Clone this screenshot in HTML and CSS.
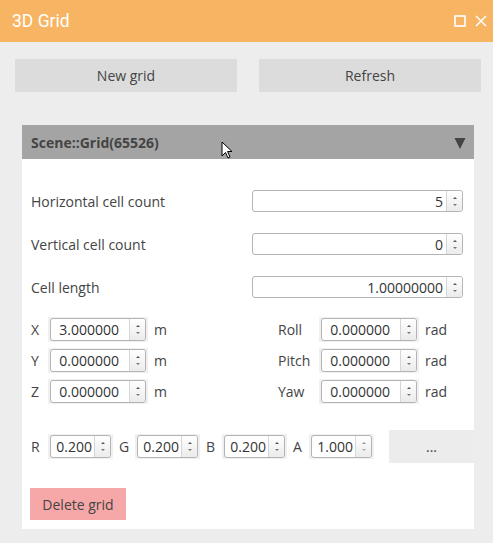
FILE: index.html
```html
<!DOCTYPE html>
<html>
<head>
<meta charset="utf-8">
<link rel="stylesheet" href="styles.css">
</head>
<body>
<div class="titlebar">
  <span class="title">3D Grid</span>
  <span class="win-icons">
    <svg width="12" height="12" viewBox="0 0 12 12"><rect x="1" y="1" width="10" height="10" fill="none" stroke="#fff" stroke-width="1.6"/></svg>
    <svg width="12" height="12" viewBox="0 0 12 12"><path d="M1 1 L11 11 M11 1 L1 11" stroke="#fff" stroke-width="1.5"/></svg>
  </span>
</div>
<div class="toolbar">
  <div class="btn">New grid</div>
  <div class="btn">Refresh</div>
</div>
<div class="panel">
  <div class="panel-header">
    <span>Scene::Grid(65526)</span>
    <svg class="caret" width="12" height="12" viewBox="0 0 12 12"><path d="M0.5 1 L11.5 1 L6 12 Z" fill="#444"/></svg>
  </div>
  <div class="panel-body">
    <div class="form">
      <div class="frow"><span>Horizontal cell count</span>
        <div class="spin wide"><span class="val">5</span><span class="arrows"><i class="up"></i><i class="dn"></i></span></div></div>
      <div class="frow"><span>Vertical cell count</span>
        <div class="spin wide"><span class="val">0</span><span class="arrows"><i class="up"></i><i class="dn"></i></span></div></div>
      <div class="frow"><span>Cell length</span>
        <div class="spin wide"><span class="val">1.00000000</span><span class="arrows"><i class="up"></i><i class="dn"></i></span></div></div>
    </div>
    <div class="pose">
      <span>X</span><div class="wrap"><div class="spin mid"><span class="val">3.000000</span><span class="arrows"><i class="up"></i><i class="dn"></i></span></div></div><span class="unit">m</span>
      <span>Roll</span><div class="wrap"><div class="spin mid"><span class="val">0.000000</span><span class="arrows"><i class="up"></i><i class="dn"></i></span></div></div><span class="unit2">rad</span>
      <span>Y</span><div class="wrap"><div class="spin mid"><span class="val">0.000000</span><span class="arrows"><i class="up"></i><i class="dn"></i></span></div></div><span class="unit">m</span>
      <span>Pitch</span><div class="wrap"><div class="spin mid"><span class="val">0.000000</span><span class="arrows"><i class="up"></i><i class="dn"></i></span></div></div><span class="unit2">rad</span>
      <span>Z</span><div class="wrap"><div class="spin mid"><span class="val">0.000000</span><span class="arrows"><i class="up"></i><i class="dn"></i></span></div></div><span class="unit">m</span>
      <span>Yaw</span><div class="wrap"><div class="spin mid"><span class="val">0.000000</span><span class="arrows"><i class="up"></i><i class="dn"></i></span></div></div><span class="unit2">rad</span>
    </div>
    <div class="color">
      <span class="cl first">R</span><div class="wrap"><div class="spin small"><span class="val">0.200</span><span class="arrows"><i class="up"></i><i class="dn"></i></span></div></div>
      <span class="cl">G</span><div class="wrap"><div class="spin small"><span class="val">0.200</span><span class="arrows"><i class="up"></i><i class="dn"></i></span></div></div>
      <span class="cl">B</span><div class="wrap"><div class="spin small"><span class="val">0.200</span><span class="arrows"><i class="up"></i><i class="dn"></i></span></div></div>
      <span class="cl">A</span><div class="wrap"><div class="spin small"><span class="val">1.000</span><span class="arrows"><i class="up dim"></i><i class="dn dim"></i></span></div></div>
      <div class="btn dots">...</div>
    </div>
    <div class="btn delete">Delete grid</div>
  </div>
</div>
<svg class="cursor" width="13" height="19" viewBox="0 0 13 19"><path d="M1 1 L1 15 L4.5 11.5 L7 17 L9 16 L6.5 10.5 L11 10.5 Z" fill="#fff" stroke="#000" stroke-width="1" stroke-linejoin="round"/></svg>
</body>
</html>
```
FILE: styles.css
```css
html, body { margin: 0; padding: 0; }
body {
  background: #ededed;
  font-family: "Open Sans", "DejaVu Sans", sans-serif;
  font-size: 14px;
  color: #444;
  width: 493px;
  height: 543px;
  position: relative;
  overflow: hidden;
}
.titlebar {
  height: 42px;
  background: #f7b563;
  display: flex;
  align-items: center;
  justify-content: space-between;
  padding: 0 6px 0 12px;
}
.title {
  font-family: Roboto, "Liberation Sans", sans-serif;
  font-size: 17.5px;
  color: #fff;
}
.win-icons { display: flex; gap: 9px; align-items: center; }
.win-icons svg { display: block; }
.toolbar {
  display: grid;
  grid-template-columns: 222px 222px;
  column-gap: 22px;
  padding: 17px 0 0 15px;
}
.btn {
  background: #dcdcdc;
  height: 33px;
  display: flex;
  align-items: center;
  justify-content: center;
  color: #444;
}
.panel {
  margin: 33px 0 0 22px;
  width: 452px;
}
.panel-header {
  height: 34px;
  background: #a4a4a4;
  display: flex;
  align-items: center;
  justify-content: space-between;
  padding: 0 8px 0 9px;
  font-weight: bold;
  font-size: 14px;
  color: #444;
}
.caret { display: block; margin-top: 1px; }
.panel-body {
  background: #fff;
  padding: 31px 0 9px 9px;
}
.form { display: flex; flex-direction: column; gap: 21px; padding-right: 11px; }
.frow { display: flex; justify-content: space-between; align-items: center; height: 22px; }
.spin {
  display: flex;
  border: 1px solid #b4b4b4;
  border-radius: 3px;
  background: #fff;
  box-sizing: border-box;
  font-size: 14px;
}
.spin .val {
  flex: 1;
  color: #333;
  display: flex;
  align-items: center;
  justify-content: flex-end;
}
.spin .arrows {
  width: 15px;
  border-left: 1px solid #d6d6d6;
  background: linear-gradient(#ffffff, #ebebeb);
  border-radius: 0 3px 3px 0;
  display: flex;
  flex-direction: column;
  align-items: center;
  justify-content: center;
  gap: 5px;
}
.arrows i {
  display: block;
  width: 0; height: 0;
  border-left: 2px solid transparent;
  border-right: 2px solid transparent;
}
.arrows i.up { border-bottom: 2px solid #555; }
.arrows i.dn { border-top: 2px solid #777; }
.arrows i.up.dim { border-bottom-color: #999; }
.arrows i.dn.dim { border-top-color: #aaa; }
.spin.wide { width: 211px; height: 22px; }
.spin.wide .val { padding-right: 3px; }
.wrap {
  background: #f0f0f0;
  padding: 1px 2px;
  display: flex;
}
.pose {
  display: grid;
  grid-template-columns: 17px 100px 130px 41px 100px auto;
  row-gap: 6px;
  align-items: center;
  margin-top: 19px;
}
.pose .unit { padding-left: 6px; }
.pose .unit2 { padding-left: 6px; }
.spin.mid { width: 96px; height: 23px; }
.spin.mid .val { padding-right: 10px; }
.color {
  display: flex;
  align-items: center;
  margin-top: 26px;
}
.color .cl { width: 16px; margin-left: 6px; }
.color .cl.first { width: 17px; margin-left: 0; }
.spin.small { width: 61px; height: 23px; }
.spin.small .val { padding-right: 2px; }
.btn.dots {
  margin-left: auto;
  width: 85px;
  height: 33px;
  background: #ececec;
}
.btn.delete {
  margin-top: 25px;
  margin-left: -1px;
  width: 96px;
  height: 32px;
  background: #f6a7a7;
  color: #444;
}
.cursor { position: absolute; left: 221px; top: 141px; }
```
